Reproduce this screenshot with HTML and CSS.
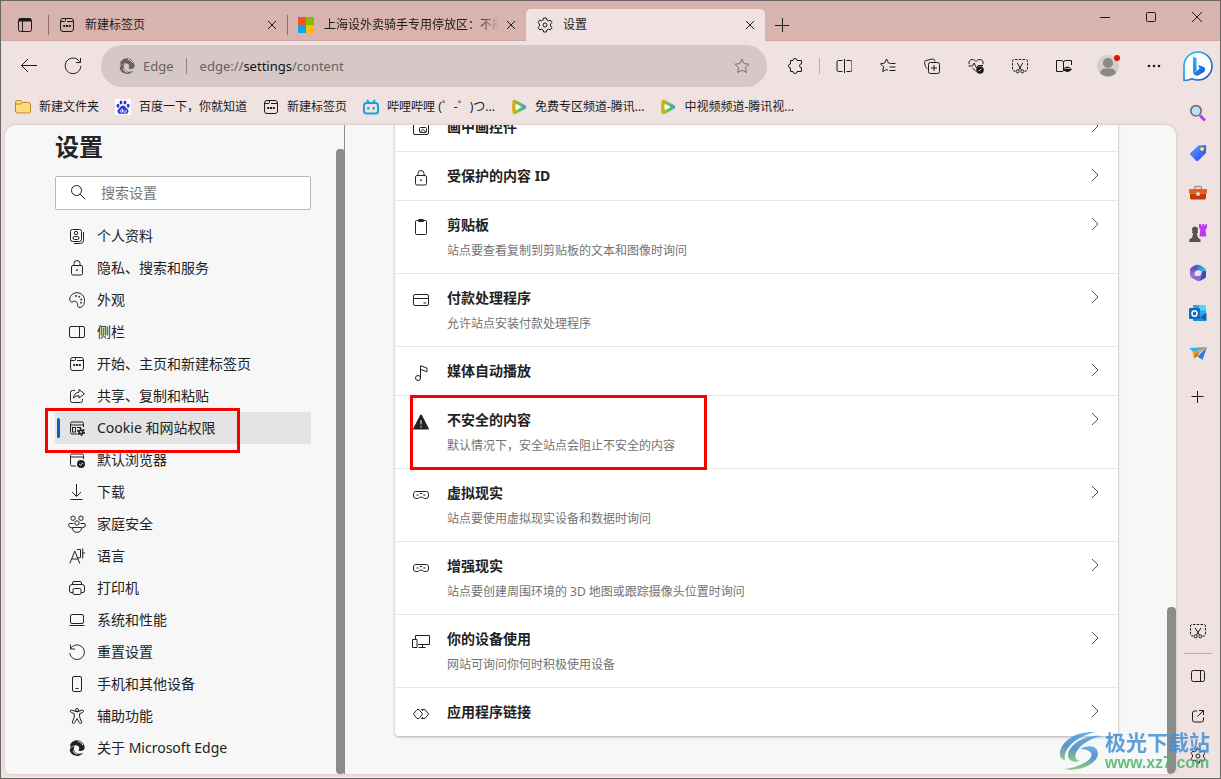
FILE: index.html
```html
<!DOCTYPE html>
<html lang="zh-CN">
<head>
<meta charset="utf-8">
<title>设置</title>
<link rel="stylesheet" href="styles.css">
</head>
<body>
<svg class="sprite" aria-hidden="true">
  <defs>
    <linearGradient id="g-bing" x1="0" y1="0" x2="1" y2="1"><stop offset="0" stop-color="#28c4f0"/><stop offset="1" stop-color="#1b48d8"/></linearGradient>
    <linearGradient id="g-tag" x1="0" y1="0" x2="1" y2="1"><stop offset="0" stop-color="#62a8ff"/><stop offset="1" stop-color="#2b3cf0"/></linearGradient>
    <linearGradient id="g-365a" x1="0" y1="0" x2="1" y2="1"><stop offset="0" stop-color="#2b62c4"/><stop offset="1" stop-color="#4fd0f0"/></linearGradient>
    <linearGradient id="g-365b" x1="0" y1="0" x2="0" y2="1"><stop offset="0" stop-color="#4a3fb0"/><stop offset="1" stop-color="#c388dc"/></linearGradient>
    <linearGradient id="g-mark" x1="0" y1="0" x2="0" y2="1"><stop offset="0" stop-color="#4aa3e8"/><stop offset="0.5" stop-color="#4585c4"/><stop offset="1" stop-color="#7cc66a"/></linearGradient>
    <linearGradient id="g-play" x1="0" y1="0" x2="1" y2="0"><stop offset="0" stop-color="#ff9d1e"/><stop offset="0.35" stop-color="#7ccf1c"/><stop offset="1" stop-color="#2f9cf5"/></linearGradient>
  </defs>
  <symbol id="close" viewBox="0 0 16 16"><path d="M4 4l8 8M12 4l-8 8"/></symbol>
  <symbol id="plus" viewBox="0 0 16 16"><path d="M8.500 1v14M1 8.500h14"/></symbol>
  <symbol id="newtab" viewBox="0 0 16 16"><rect x="1.500" y="1.500" width="13" height="13" rx="2.500"/><path d="M2 4.500h3.500q1 0 1-1V2M8 4.500h6"/><path d="M4.200 9h2M7 9h2M9.800 9h2" stroke-width="2"/></symbol>
  <symbol id="gear" viewBox="0 0 16 16"><path d="M6.600 1h2.800l.5 2 1.500.8 2-.6 1.500 2.400L13.500 7v2l1.400 1.400-1.500 2.400-2-.6-1.500.8-.5 2H6.600l-.5-2-1.500-.8-2 .6L1.100 10.400 2.500 9V7L1.100 5.600l1.500-2.400 2 .6L6.100 3z" stroke-linejoin="round"/><circle cx="8" cy="8" r="2"/></symbol>
  <symbol id="edge" viewBox="0 0 16 16"><path fill="currentColor" stroke="none" d="M8 .3A7.700 7.700 0 0 1 15.700 7.500C15.600 9.500 14 11 11.700 11c-1.600 0-2.300-.6-2-1.100.7-1 .8-2.600-.3-3.600C7.300 4.400 3.700 4.900 1.600 8.300 1.300 7.200 1.400 6 1.900 4.900 1.300 5.300.7 6 .3 7A7.700 7.700 0 0 1 8 .3z"/><path fill="currentColor" stroke="none" d="M.6 10.300C1.500 7.800 3.600 6.300 5.700 6 4.400 7.700 4.400 10.300 6 12c1.800 1.900 5 2.400 8.200.8A7.700 7.700 0 0 1 .6 10.300z"/><path d="M9 1.600c2.200.2 4 1.600 4.900 3.600M4 10.600c.7 2 2.300 3.300 4.300 3.700" stroke="#f0e4e3" stroke-width="1"/></symbol>
  <symbol id="scissors" viewBox="0 0 18 16"><path d="M4.500 13H3a1.500 1.500 0 0 1-1.500-1.500V3A1.500 1.500 0 0 1 3 1.500h12A1.500 1.500 0 0 1 16.500 3v8.500A1.500 1.500 0 0 1 15 13h-1.500" stroke-dasharray="2.500 1.300"/><path d="M6.200 5l4.300 7M11.800 5l-4.300 7"/><circle cx="6.700" cy="13.400" r="1.500"/><circle cx="11.300" cy="13.400" r="1.500"/></symbol>
  <symbol id="lock" viewBox="0 0 16 16"><rect x="2.500" y="5.500" width="11" height="9.500" rx="1.500"/><path d="M5 5.500V3.500a3 3 0 0 1 6 0v2"/><circle cx="8" cy="10.200" r=".9" fill="currentColor" stroke="none"/></symbol>
  <symbol id="chevron" viewBox="0 0 16 16"><path d="M5 2l6 6-6 6"/></symbol>
  <symbol id="panel" viewBox="0 0 16 16"><rect x=".5" y="2.500" width="15" height="11" rx="1.500"/><path d="M10.500 2.500v11"/></symbol>
  <symbol id="vr" viewBox="0 0 16 16"><path d="M2.500 4.500h11q2 .3 2 2.200V9q0 2.500-2.300 2.500h-1.400c-1.600 0-2.200-1.500-3.800-1.500s-2.200 1.500-3.800 1.500H2.800Q.5 11.500.5 9V6.700q0-1.900 2-2.200z"/><path d="M3.500 8h2.200M10.300 8h2.200M6.800 6.500h2.400"/></symbol>
  <symbol id="tencent" viewBox="0 0 16 16"><path d="M1.500 2.500C1.500.8 3 .2 4.600 1l9.600 5.300c1.500.9 1.500 2.500 0 3.400L4.600 15c-1.600.8-3.100.2-3.100-1.500Q.4 8 1.500 2.500z" fill="url(#g-play)" stroke="none"/><path d="M4.800 4.800l6 3.200-6 3.200q-.8-3.200 0-6.400z" fill="#fff" stroke="none"/></symbol>
</svg>

<div class="window">
  <header class="tabstrip">
    <button class="tab-actions" aria-label="标签操作"><svg class="i16" viewBox="0 0 16 16"><rect x="1.500" y="1.500" width="13" height="13" rx="2"/><path d="M2 3h12" stroke-width="3"/><path d="M5.500 4v10.500"/></svg></button>
    <div class="tab">
      <button class="tab-label"><svg class="i16"><use href="#newtab"/></svg><span class="tab-text">新建标签页</span></button>
      <button class="tab-close" aria-label="关闭"><svg class="i16"><use href="#close"/></svg></button>
    </div>
    <div class="tab">
      <button class="tab-label"><svg class="i16 solid" viewBox="0 0 16 16"><path fill="#f35325" d="M0 0h8v8H0z"/><path fill="#81bc06" d="M8 0h8v8H8z"/><path fill="#05a6f0" d="M0 8h8v8H0z"/><path fill="#ffba08" d="M8 8h8v8H8z"/></svg><span class="tab-text fade">上海设外卖骑手专用停放区：不能</span></button>
      <button class="tab-close" aria-label="关闭"><svg class="i16"><use href="#close"/></svg></button>
    </div>
    <div class="tab active">
      <button class="tab-label"><svg class="i16"><use href="#gear"/></svg><span class="tab-text">设置</span></button>
      <button class="tab-close" aria-label="关闭"><svg class="i16"><use href="#close"/></svg></button>
    </div>
    <button class="new-tab" aria-label="新建标签页"><svg class="i16"><use href="#plus"/></svg></button>
    <div class="controls">
      <button aria-label="最小化"><svg class="i16" viewBox="0 0 16 16"><path d="M3 8.500h10"/></svg></button>
      <button aria-label="最大化"><svg class="i16" viewBox="0 0 16 16"><rect x="3.500" y="3.500" width="9" height="9" rx="1"/></svg></button>
      <button aria-label="关闭窗口"><svg class="i16" viewBox="0 0 16 16"><path d="M3 3l10 10M13 3L3 13"/></svg></button>
    </div>
  </header>

  <div class="below">
    <div class="browser">
      <div class="toolbar">
        <button class="tool" aria-label="返回"><svg class="i18" viewBox="0 0 18 18"><path d="M17 8.500H1.500M8 2L1.500 8.500 8 15"/></svg></button>
        <button class="tool" aria-label="刷新"><svg class="i18" viewBox="0 0 18 18"><path d="M15.500 4.500A7.800 7.800 0 1 0 16.800 9M16.500 1v4.500H12"/></svg></button>
        <div class="address">
          <svg class="i16 brand"><use href="#edge"/></svg>
          <span class="brand-name">Edge</span>
          <div class="url" role="textbox" contenteditable="true" aria-label="地址栏">edge://<b>settings</b>/content</div>
          <button class="star" aria-label="收藏"><svg class="i16" viewBox="0 0 16 16"><path d="M8 1l2.100 4.600 5 .6-3.700 3.400 1 5L8 12.100l-4.400 2.500 1-5L.9 6.200l5-.6z" stroke-linejoin="round"/></svg></button>
        </div>
        <button class="tool puzzle" aria-label="扩展"><svg class="i16" viewBox="0 0 16 16"><path d="M3.500 2.500H6a2 2 0 0 1 4 0h4.500v3.300a1.900 1.900 0 0 0 0 3.900v3.800H10a2 2 0 0 1-4 0H3.500V10a2 2 0 0 1 0-4z" stroke-linejoin="round"/></svg></button>
        <button class="tool" aria-label="拆分屏幕"><svg class="i16" viewBox="0 0 16 16"><path d="M8.500 1v14M6.500 2.500H2.500A1.500 1.500 0 0 0 1 4v8A1.500 1.500 0 0 0 2.500 13.500h4M10.500 2.500h4A1.500 1.500 0 0 1 16 4v8a1.500 1.500 0 0 1-1.500 1.500h-4"/></svg></button>
        <button class="tool" aria-label="收藏夹"><svg class="i16" viewBox="0 0 16 16"><path d="M15.500 5.500h-5L8.500 5 6.500 1 4.700 5l-4.200.8 3 3-.8 4.700 3.800-2 1.500.8M9.500 9h6M9.500 12.500h6" stroke-linejoin="round"/></svg></button>
        <button class="tool" aria-label="集锦"><svg class="i16" viewBox="0 0 16 16"><path d="M3.500 10.500L2.600 10Q1.700 9.600 1.400 8.500L.6 4.500Q.4 3 1.800 2.600L8.500 1q1.500-.2 2 1.200l.3 1.300"/><rect x="4.500" y="4.500" width="11" height="11" rx="2"/><path d="M10 7v6M7 10h6"/></svg></button>
        <button class="tool" aria-label="浏览器概要"><svg class="i16" viewBox="0 0 16 16"><path d="M8 13.500L4.500 10M1.200 6.200C.3 3.200 2.100 1.500 4.200 1.500c1.700 0 2.900.8 3.800 2.100.9-1.300 2.100-2.100 3.800-2.100 2.300 0 4 1.800 3.100 4.700M.5 8h4l1.500-3 2.500 5L10 7.500h5"/><circle cx="12" cy="12" r="3.800" fill="currentColor" stroke="none"/><path d="M10.700 13.300l2.600-2.600" stroke="#f0e2e1"/></svg></button>
        <button class="tool" aria-label="屏幕截图"><svg class="i18"><use href="#scissors"/></svg></button>
        <button class="tool" aria-label="阅读"><svg class="i16" viewBox="0 0 16 16"><path d="M7 13.500H.5v-11h5Q7.500 2.500 7.500 4.500v8.500M7.500 4.500q0-2 2-2h6V7"/><path d="M6.700 11.300Q11.300 5.500 16 11.300 11.300 17.200 6.700 11.300z" fill="currentColor" stroke="none"/><path d="M8.500 10.500h6" stroke="#f0e2e1" stroke-width=".7"/></svg></button>
        <button class="tool profile" aria-label="个人资料"><svg class="avatar solid" viewBox="0 0 26 26"><circle cx="12" cy="14" r="11" fill="#d2cfcd"/><circle cx="12" cy="11" r="5" fill="#8b8885"/><path d="M4 21q1-4.500 5-4.500h6q4 0 5 4.500a11 11 0 0 1-16 0z" fill="#8b8885"/><circle cx="21" cy="6" r="3" fill="#e8100c"/></svg></button>
        <button class="tool" aria-label="更多"><svg class="i16 solid" viewBox="0 0 16 16"><g fill="currentColor"><circle cx="3" cy="8" r="1.300"/><circle cx="8" cy="8" r="1.300"/><circle cx="13" cy="8" r="1.300"/></g></svg></button>
      </div>

      <nav class="bookmarks" aria-label="收藏夹栏">
        <a href="#"><svg class="i16" viewBox="0 0 16 16"><path d="M.5 3.500q0-2 2-2h3.200l2 2h5.800q2 0 2 2v6.500q0 2-2 2h-11q-2 0-2-2z" fill="#ffdc7c" stroke="#b98a1c"/><path d="M.8 5h5l1.800-1.500" stroke="#b98a1c"/></svg>新建文件夹</a>
        <a href="#"><svg class="i16 solid" viewBox="0 0 16 16"><rect width="16" height="16" rx="1" fill="#fff"/><g fill="#2a36d8"><ellipse cx="3" cy="6.700" rx="1.500" ry="2"/><ellipse cx="6" cy="3.400" rx="1.400" ry="2"/><ellipse cx="10" cy="3.400" rx="1.400" ry="2"/><ellipse cx="13.200" cy="6.700" rx="1.500" ry="2"/><path d="M8 6.500c2 0 2.700 2 4.200 3.200 2.300 2 1.300 5.300-1.400 5.100-2-.2-3.600-.2-5.600 0-2.700.2-3.700-3.100-1.400-5.100C5.300 8.500 6 6.500 8 6.500z"/></g><circle cx="6.300" cy="12" r="1.200" fill="none" stroke="#fff" stroke-width=".8"/><path d="M7.500 9.500v4M9 10.800v2.400h2.200v-2.400" fill="none" stroke="#fff" stroke-width=".8"/></svg>百度一下，你就知道</a>
        <a href="#"><svg class="i16"><use href="#newtab"/></svg>新建标签页</a>
        <a href="#"><svg class="i16" viewBox="0 0 16 16"><g stroke="#12a5da" stroke-width="2"><rect x="1" y="4" width="14" height="10.500" rx="2.500"/><path d="M4 1l2 2.500M12 1l-2 2.500M5.300 8v2.500M10.700 8v2.500"/></g></svg>哔哩哔哩 (゜-゜)つ...</a>
        <a href="#"><svg class="i16"><use href="#tencent"/></svg>免费专区频道-腾讯...</a>
        <a href="#"><svg class="i16"><use href="#tencent"/></svg>中视频频道-腾讯视...</a>
      </nav>

      <div class="page">
        <aside class="settings-nav">
          <h1>设置</h1>
          <label class="search"><svg class="i16" viewBox="0 0 16 16"><circle cx="6.500" cy="6.500" r="5"/><path d="M10.200 10.200l5 5"/></svg><input type="search" placeholder="搜索设置" aria-label="搜索设置"></label>
          <nav aria-label="设置">
            <a href="#"><svg class="i16" viewBox="0 0 16 16"><rect x="1.500" y="1.500" width="11" height="12" rx="2"/><path d="M14.500 4v8.500q0 3-3 3H5"/><circle cx="7" cy="5" r="1.700"/><rect x="4" y="8.500" width="6" height="3" rx="1.500"/></svg>个人资料</a>
            <a href="#"><svg class="i16"><use href="#lock"/></svg>隐私、搜索和服务</a>
            <a href="#"><svg class="i16" viewBox="0 0 16 16"><path d="M1 8.500C-.3 4.500 4 .7 8 .7c4.500 0 7.500 3.500 7.500 7.500 0 4.500-2 7.300-4.500 7.300-3.500 0-1.500-3-3-5C6.500 8.500 5 9 4 9.700c-1.200.8-2.500.2-3-1.200z"/><g fill="currentColor" stroke="none"><circle cx="7" cy="4" r=".9"/><circle cx="10.300" cy="4.700" r=".9"/><circle cx="12.300" cy="7.500" r=".9"/><circle cx="12" cy="10.700" r=".9"/></g></svg>外观</a>
            <a href="#"><svg class="i16"><use href="#panel"/></svg>侧栏</a>
            <a href="#"><svg class="i16"><use href="#newtab"/></svg>开始、主页和新建标签页</a>
            <a href="#"><svg class="i16" viewBox="0 0 16 16"><path d="M6 2.500H3.500q-2 0-2 2v8q0 2 2 2h8q2 0 2-2V11"/><path d="M10 1.500l5.500 4.300L10 10V7.600Q6.500 7.500 4.500 10q.3-5 5.500-5.800z" stroke-linejoin="round"/></svg>共享、复制和粘贴</a>
            <a href="#" class="current" aria-current="page"><svg class="i16" viewBox="0 0 16 16"><path d="M8 14H3q-1.500 0-1.500-1.500v-9Q1.500 2 3 2h10q1.500 0 1.500 1.500V7M1.500 5h13M8 7.500h4"/><rect x="3.500" y="7.500" width="3" height="4.500"/><circle cx="12" cy="12" r="2.600" fill="currentColor" stroke="none"/><circle cx="12" cy="12" r="3" stroke-width="2" stroke-dasharray="1.700 1.440"/><circle cx="12" cy="12" r="1" fill="#e4e4e4" stroke="none"/></svg>Cookie 和网站权限</a>
            <a href="#"><svg class="i16" viewBox="0 0 16 16"><path d="M7 14H3q-1.500 0-1.500-1.500v-9Q1.500 2 3 2h10q1.500 0 1.500 1.500V7M1.500 5h13"/><circle cx="12" cy="12" r="4" fill="currentColor" stroke="none"/><path d="M10.200 12l1.300 1.300 2.400-2.400" stroke="#fff"/></svg>默认浏览器</a>
            <a href="#"><svg class="i16" viewBox="0 0 16 16"><path d="M7.500 0v12M3 8l4.500 4.500L12 8M1.500 15.500h12"/></svg>下载</a>
            <a href="#"><svg class="i18" viewBox="0 0 18 18"><circle cx="5" cy="3.200" r="2.200"/><circle cx="13" cy="3.200" r="2.200"/><circle cx="9" cy="8" r="2.200"/><path d="M5.500 8.500H2Q.5 8.500.5 9.800q0 2.700 3.500 3.200M12.500 8.500H16q1.500 0 1.500 1.300 0 2.700-3.500 3.200M4.500 12.500h9q0 4.800-4.500 4.800t-4.500-4.800z"/></svg>家庭安全</a>
            <a href="#"><svg class="i16" viewBox="0 0 16 16"><path d="M.8 15.500L5.800 3l5 12.500M2.700 11h6.200M8 1.500h3.500v8q-1.500 1-2.500 0M13.700.5v10M13.700 5H16"/></svg>语言</a>
            <a href="#"><svg class="i16" viewBox="0 0 16 16"><path d="M3.500 4V3q0-1.500 1.500-1.500h6q1.500 0 1.500 1.500v1M4 12.500H2Q.5 12.500.5 11V7q0-2.500 2.500-2.500h10q2.500 0 2.500 2.500v4q0 1.500-1.500 1.500h-2"/><rect x="4" y="8.500" width="8" height="6" rx="1.200"/></svg>打印机</a>
            <a href="#"><svg class="i16" viewBox="0 0 16 16"><rect x="1.500" y="2.500" width="13" height="9" rx="1.500"/><path d="M.5 13.500h15"/></svg>系统和性能</a>
            <a href="#"><svg class="i16" viewBox="0 0 16 16"><path d="M1.500.5V5H6M1.500 5A7.300 7.300 0 1 1 .8 9"/></svg>重置设置</a>
            <a href="#"><svg class="i16" viewBox="0 0 16 16"><rect x="3.500" y=".5" width="9" height="15" rx="1.500"/><path d="M6.500 12.500h3"/></svg>手机和其他设备</a>
            <a href="#"><svg class="i16" viewBox="0 0 16 16"><circle cx="8" cy="2" r="1.500"/><path d="M6 3.300L3 2.200q-1.700-.2-1.700 1 0 .9 1 1.300l3 1.200V9l-2 5q-.2 1.400 1.200 1.500.8 0 1.100-.8L8 10.500l2.400 4.200q.4.900 1.200.8 1.400-.2 1-1.500l-2-5V5.700l3-1.200q1-.5 1-1.300 0-1.200-1.600-1L10 3.300q-2 1-4 0z" stroke-linejoin="round"/></svg>辅助功能</a>
            <a href="#"><svg class="i16"><use href="#edge"/></svg>关于 Microsoft Edge</a>
          </nav>
          <div class="nav-scroll"></div>
        </aside>

        <main class="content">
          <div class="card">
            <a class="row" href="#"><svg class="i16" viewBox="0 0 16 16"><rect x=".5" y="1.500" width="15" height="12" rx="1.500"/><rect x="6.500" y="6.500" width="7" height="5" rx="1"/><path d="M7 11l3-2.500 3 2.500"/></svg><span class="text"><strong>画中画控件</strong></span><svg class="i16 go"><use href="#chevron"/></svg></a>
            <a class="row" href="#"><svg class="i16"><use href="#lock"/></svg><span class="text"><strong>受保护的内容 ID</strong></span><svg class="i16 go"><use href="#chevron"/></svg></a>
            <a class="row" href="#"><svg class="i16" viewBox="0 0 16 16"><rect x="2.500" y="1.500" width="11" height="14" rx="1"/><path d="M5.500 1v1.500h5V1q0-.5-.5-.5H6q-.5 0-.5.500z"/></svg><span class="text"><strong>剪贴板</strong><small>站点要查看复制到剪贴板的文本和图像时询问</small></span><svg class="i16 go"><use href="#chevron"/></svg></a>
            <a class="row" href="#"><svg class="i16" viewBox="0 0 16 16"><rect x=".5" y="2.500" width="15" height="11" rx="1.500"/><path d="M.5 6.500h15M10.500 11h2.500"/></svg><span class="text"><strong>付款处理程序</strong><small>允许站点安装付款处理程序</small></span><svg class="i16 go"><use href="#chevron"/></svg></a>
            <a class="row" href="#"><svg class="i16" viewBox="0 0 16 16"><circle cx="5" cy="13" r="2.500"/><path d="M7.500 13V.7l6.500 2.500v3.600L7.500 4.300"/></svg><span class="text"><strong>媒体自动播放</strong></span><svg class="i16 go"><use href="#chevron"/></svg></a>
            <a class="row marked" href="#"><svg class="i16" viewBox="0 0 16 16"><path d="M8 .5Q8.600.5 9 1.200L16 15v.5H0V15L7 1.200Q7.400.5 8 .5z" fill="currentColor" stroke="none"/><path d="M8 6v4.500M8 12v1.500" stroke="#fff"/></svg><span class="text"><strong>不安全的内容</strong><small>默认情况下，安全站点会阻止不安全的内容</small></span><svg class="i16 go"><use href="#chevron"/></svg></a>
            <a class="row" href="#"><svg class="i16"><use href="#vr"/></svg><span class="text"><strong>虚拟现实</strong><small>站点要使用虚拟现实设备和数据时询问</small></span><svg class="i16 go"><use href="#chevron"/></svg></a>
            <a class="row" href="#"><svg class="i16"><use href="#vr"/></svg><span class="text"><strong>增强现实</strong><small>站点要创建周围环境的 3D 地图或跟踪摄像头位置时询问</small></span><svg class="i16 go"><use href="#chevron"/></svg></a>
            <a class="row" href="#"><svg class="i18" viewBox="0 0 18 16"><path d="M3.500 6V2.500h14v9H6M.5 6.500H5v8H.5zM6.500 14.500h7M10.500 11.500v3"/></svg><span class="text"><strong>你的设备使用</strong><small>网站可询问你何时积极使用设备</small></span><svg class="i16 go"><use href="#chevron"/></svg></a>
            <a class="row" href="#"><svg class="i16" viewBox="0 0 16 16"><path d="M4 3.500h2L9.500 8 6 12.500H4L.5 8zM8.500 3.500H12L15.500 8 12 12.500H8.500M8.500 3.500L9.800 5M8.500 12.500L9.800 11" stroke-linejoin="round"/></svg><span class="text"><strong>应用程序链接</strong></span><svg class="i16 go"><use href="#chevron"/></svg></a>
          </div>
          <div class="page-scroll"></div>
        </main>
      </div>
    </div>

    <aside class="sidebar">
      <button class="bing" aria-label="必应"><svg viewBox="0 0 32 32"><path d="M2 30.500V16A14 14 0 1 1 16 30q-3.500 0-6-1.300-3.500 1.600-8 1.800z" fill="#fff" stroke="url(#g-bing)" stroke-width="1.600"/><path d="M11 6.500l3.500 1.700v12L11 23zM14.500 21l3-2.200-1.500-4 6.500 2.500q1.500 2.500-.5 4.700l-6 3.500q-3 1-5-2.500z" fill="url(#g-bing)" stroke="none"/></svg></button>
      <button aria-label="搜索"><svg class="i18" viewBox="0 0 18 18"><path d="M11 11.500l5 5" stroke="#b83cf5" stroke-width="3"/><circle cx="7" cy="6.800" r="5.200" fill="#bfe0f6" stroke="#73706f" stroke-width="1.700"/></svg></button>
      <button aria-label="购物"><svg class="i18 solid" viewBox="0 0 18 18"><path d="M9.500 1.500L16 1q1.200 0 1.200 1.200L17 9l-7.500 7.500q-1.200 1-2.500 0L1.500 11q-1-1.200 0-2.300z" fill="url(#g-tag)"/><circle cx="13" cy="5" r="1.500" fill="#fff" stroke="#ffc928"/></svg></button>
      <button aria-label="工具"><svg class="i18" viewBox="0 0 18 18"><path d="M5.500 6V4q0-1.500 1.500-1.500h4q1.500 0 1.500 1.500v2" stroke="#9a9796" stroke-width="1.500"/><path d="M1 5h16q1 0 1 1v3.500H0V6q0-1 1-1z" fill="#ec5a1c" stroke="none"/><path d="M1 9.500h16V14q0 1.500-1.500 1.500h-13Q1 15.500 1 14z" fill="#c23a0c" stroke="none"/><circle cx="9" cy="10" r="2" fill="#d8d4d2" stroke="none"/></svg></button>
      <button aria-label="游戏"><svg class="i18 solid" viewBox="0 0 18 18"><path d="M10 0h2v1.500h1.300V0h2v1.500H16.500V0H18v4l-1.500 1.500.8 7H10.500l.8-7L10 4z" fill="#b93cf0"/><path d="M6 2.500a3 3 0 0 1 2.300 5H9V9H7.800l1 4.500 2.700 2V18H.3v-2.500l2.900-2 1-4.500H3V7.500h.7A3 3 0 0 1 6 2.500z" fill="#555350"/></svg></button>
      <button aria-label="Microsoft 365"><svg class="i18 solid" viewBox="0 0 18 18"><path d="M6 1.200q3-.8 5.500.2L16 4.200q1 .7 1 2V9l-4.500-1.800Q9 5 6.500 7.500z" fill="url(#g-365a)"/><path d="M6 1.200L2 3.700Q1 4.500 1 6v6l4.500 2.500L5.700 9Q6 6 10 5.500q-3-1.500-4-4.300z" fill="url(#g-365b)"/><path d="M17 9v3q0 1.300-1 2l-5 2.800q-1.500.8-3 0L1.500 13l5-1.500q2 1.500 4.500 0 2-1.500 1.700-4.200z" fill="#9664cf"/><path d="M17 7v5q0 1.300-1 2l-5 2.800q2.300-3.800 2-9.500z" fill="#3450bd"/></svg></button>
      <button aria-label="Outlook"><svg class="i18 solid" viewBox="0 0 18 18"><path d="M4 1h13v11H4z" fill="#28a8ea"/><path d="M10 1h7v5.500h-7z" fill="#50d9ff"/><path d="M4 9l6.500 4L17 9v7q0 1-1 1H5q-1 0-1-1z" fill="#1490df"/><path d="M17.500 9v8L11 13z" fill="#0c63b0"/><rect y="4" width="11" height="11" rx="1" fill="#0f6cbd"/><ellipse cx="5.500" cy="9.500" rx="2.500" ry="2.800" fill="none" stroke="#fff" stroke-width="1.500"/></svg></button>
      <button aria-label="Drop"><svg class="i18 solid" viewBox="0 0 18 18"><path d="M0 4l18-1-12 6.500z" fill="#32b5f2"/><path d="M18 3l-4.500 13-5-3.500z" fill="#2b7de0"/><path d="M18 3L3.500 8.500 5 14.500l3.500-4z" fill="#f5a21c"/><path d="M5 14.500l1.200-4.300 4-2.200-1.700 4z" fill="#b5731b"/></svg></button>
      <button class="add" aria-label="添加"><svg class="i16" viewBox="0 0 16 16"><path d="M7.500 2v12M1.500 7.500h12"/></svg></button>
      <div class="spacer"></div>
      <button aria-label="屏幕截图"><svg class="i18"><use href="#scissors"/></svg></button>
      <hr>
      <button aria-label="侧栏"><svg class="i16" viewBox="0 0 16 16"><rect x="1.500" y="2.500" width="13" height="11" rx="2"/><path d="M10.500 2.500v11"/></svg></button>
      <button aria-label="在新窗口打开"><svg class="i16" viewBox="0 0 16 16"><path d="M7 3H4.500q-2 0-2 2v7q0 2 2 2h7q2 0 2-2V9.500M9 2.500h4.500V7M13.500 2.500l-6 6"/></svg></button>
      <button aria-label="设置"><svg class="i16"><use href="#gear"/></svg></button>
    </aside>
  </div>

  <div class="watermark">
    <svg class="solid" viewBox="0 0 46 40"><path d="M36 1C18 0 3 9 1 21c-.5 5 2 8 5 8C4 18 16 6 36 1z" fill="url(#g-mark)"/><path d="M43 5C27 3 10 13 9 24c0 6 6 8 12 6-5-1-6-5-3-10C22 13 32 7 43 5z" fill="url(#g-mark)"/><path d="M21 18c9-5 18-3 18 5C38 33 21 41 5 38c11-1 24-6 27-12 2-5-3-8-11-8z" fill="url(#g-mark)"/></svg>
    <div><p class="mark-name">极光下载站</p><p class="mark-site">www.xz7.com</p></div>
  </div>
</div>
</body>
</html>
```
FILE: styles.css
```css
*, *::before, *::after { box-sizing: border-box; }

body {
  margin: 0;
  font-family: "Noto Sans", "Noto Sans CJK SC", sans-serif;
  font-size: 12px;
  color: #1b1b1b;
}

.sprite { position: absolute; width: 0; height: 0; }

svg { display: block; flex: none; fill: none; stroke: currentColor; }
svg.solid { stroke: none; }
.i16 { width: 16px; height: 16px; }
.i18 { width: 18px; height: 18px; }

button {
  display: flex;
  align-items: center;
  justify-content: center;
  padding: 0;
  border: 0;
  background: none;
  color: inherit;
  font: inherit;
}

a { color: inherit; text-decoration: none; }

.window {
  position: relative;
  display: flex;
  flex-direction: column;
  height: 100vh;
  border: 1px solid #6c6565;
  background: #f0e2e1;
  overflow: hidden;
}

/* Tab strip */
.tabstrip {
  display: flex;
  height: 40px;
  padding-top: 8px;
  background: #d9b3ad;
  box-shadow: inset 0 -1px #cfa9a4;
}
.tab-actions { width: 47px; }
.tab { display: flex; align-items: center; width: 239px; min-width: 0; padding-right: 7px; }
.tab::before { content: ""; width: 1px; height: 20px; background: #8d706d; }
.tab-label { flex: 1; min-width: 0; justify-content: flex-start; gap: 10px; padding-left: 10px; height: 32px; }
.tab-text { flex: 1; overflow: hidden; white-space: nowrap; text-align: left; line-height: 20px; }
.fade { mask-image: linear-gradient(to right, #000 88%, transparent); }
.tab-close { width: 16px; height: 16px; margin-left: 4px; }
.tab.active { background: #f0e2e1; border-radius: 5px 5px 0 0; }
.tab.active::before { background: none; }
.new-tab { width: 34px; }
.controls { display: flex; margin-left: auto; height: 32px; margin-top: -8px; }
.controls button { width: 46px; }

/* Area below the tabs */
.below { display: flex; flex: 1; min-height: 0; }
.browser { display: flex; flex-direction: column; flex: 1; min-width: 0; }
.toolbar { display: flex; align-items: center; height: 50px; padding-left: 6px; }
.tool { width: 44px; height: 40px; }
.tool.profile { width: 46px; }
.avatar { width: 26px; height: 26px; margin-bottom: 2px; }
.tool.puzzle { width: 55px; background: linear-gradient(#b9adac, #b9adac) right 2px center / 1px 16px no-repeat; }

.address {
  display: flex;
  align-items: center;
  flex: 1;
  height: 42px;
  margin-left: 6px;
  padding: 0 17px 0 18px;
  border-radius: 21px;
  background: #d6c8c7;
  color: #686160;
  font-size: 13px;
}
.brand-name { margin-left: 8px; padding-right: 12px; border-right: 1px solid #8b8180; line-height: 16px; }
.url { flex: 1; padding-left: 13px; }
.url b { color: #111; font-weight: 400; }
.star { color: #777170; width: 16px; }

.bookmarks { display: flex; align-items: center; gap: 16px; height: 34px; padding: 0 14px 4px; white-space: nowrap; }
.bookmarks a { display: flex; align-items: center; gap: 8px; }
.bookmarks svg { margin-top: 2px; }

/* Page */
.page {
  display: flex;
  flex: 1;
  min-height: 0;
  margin: 0 0 4px 4px;
  border-radius: 10px 10px 6px 6px;
  background: #f7f7f7;
  box-shadow: 0 0 3px #c9b5b4;
  overflow: hidden;
}

.settings-nav {
  position: relative;
  flex: none;
  width: 340px;
  padding: 6px 33px 0 50px;
  border-right: 1px solid #8e8e8e;
}
.settings-nav h1 { margin: 0; font-size: 24px; line-height: 32px; color: #252525; }
.search {
  display: flex;
  align-items: center;
  gap: 15px;
  height: 34px;
  margin: 13px 0 10px;
  padding: 0 14px 2px;
  border: 1px solid #b8b8b8;
  border-radius: 2px;
  background: #fff;
}
.search input { flex: 1; min-width: 0; padding: 0; border: 0; outline: 0; background: none; font: inherit; font-size: 14px; }
.search input::placeholder { color: #767676; }
.settings-nav nav { color: #222; font-size: 14px; }
.settings-nav nav a { position: relative; display: flex; align-items: center; gap: 12px; height: 32px; padding: 0 0 2px 14px; }
.settings-nav nav svg { margin-top: 2px; }
.settings-nav nav .i18 { margin: 2px -1px 0; }
.settings-nav nav .current { border-radius: 2px; background: #e4e4e4; }
.current::before { content: ""; position: absolute; left: 2px; top: 6px; width: 3px; height: 20px; border-radius: 2px; background: #0067c0; }
.current::after { content: ""; position: absolute; z-index: 2; left: -10px; top: -4px; width: 195px; height: 45px; border: 3px solid #f80000; }
.nav-scroll { position: absolute; right: -1px; top: 24px; bottom: 0; width: 9px; border-radius: 4px; background: #8c8c8c; }

.content {
  position: relative;
  display: flex;
  flex-direction: column;
  justify-content: flex-end;
  flex: 1;
  min-width: 0;
  padding: 0 58px 38px 50px;
  overflow: hidden;
}
.card { flex: none; border-radius: 4px; background: #fff; box-shadow: 0 1px 3px rgba(0, 0, 0, 0.3); }
.row { position: relative; display: flex; align-items: flex-start; gap: 18px; padding: 14px 15px 14px 18px; border-bottom: 1px solid #e6e6e6; color: #222; }
.row:last-child { border-bottom: 0; }
.row > svg:first-child { margin-top: 4px; }
.row > .i18:first-child { margin: 3px -1px 0; }
.text { flex: 1; min-width: 0; }
.text strong { display: block; font-size: 14px; line-height: 20px; }
.text small { display: block; margin-top: 8px; font-size: 12px; line-height: 16px; color: #737373; }
.go { margin-top: 1px; color: #555; }
.marked::after { content: ""; position: absolute; left: 15px; top: -1px; width: 297px; height: 75px; border: 3px solid #f80000; }
.page-scroll { position: absolute; right: 0; top: 482px; bottom: 0; width: 9px; border-radius: 4px; background: #8c8c8c; }

/* Right sidebar */
.sidebar { display: flex; flex-direction: column; align-items: center; width: 44px; padding-bottom: 2px; }
.sidebar button { width: 40px; height: 40px; flex: none; }
.sidebar .bing { height: 50px; margin-bottom: 2px; }
.bing svg { width: 32px; height: 32px; }
.sidebar .add { margin-top: 4px; }
.spacer { flex: 1; }
.sidebar hr { width: 28px; height: 1px; margin: 2px 0; border: 0; background: #b8aaa9; }

/* Site mark */
.watermark { position: absolute; right: 10px; bottom: 6px; display: flex; align-items: center; pointer-events: none; opacity: 0.85; }
.watermark svg { width: 46px; height: 40px; }
.watermark p { margin: 0; }
.mark-name { color: #4590d2; font-size: 21px; font-weight: 700; line-height: 24px; }
.mark-site { color: #4cb56c; font-family: "Liberation Sans", sans-serif; font-size: 16px; font-weight: 700; line-height: 18px; }
```
